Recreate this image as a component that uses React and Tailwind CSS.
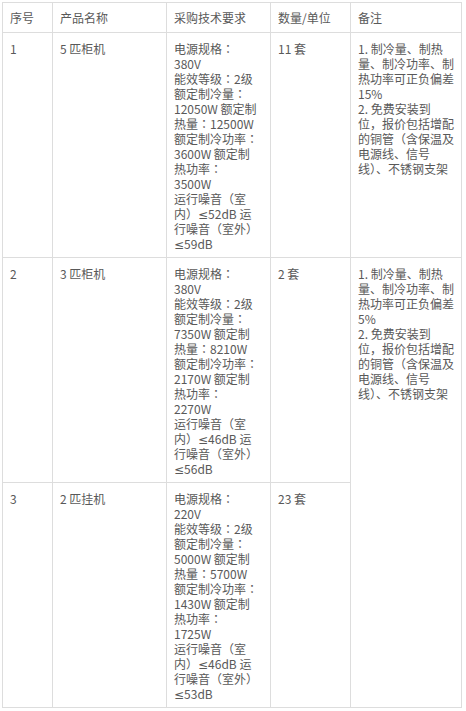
import React from "react";

const rows = [
  {
    no: "1",
    name: "5 匹柜机",
    tech: [
      "电源规格：",
      "380V",
      "能效等级：2级",
      "额定制冷量：",
      "12050W 额定制",
      "热量：12500W",
      "额定制冷功率：",
      "3600W 额定制",
      "热功率：",
      "3500W",
      "运行噪音（室",
      "内）≤52dB 运",
      "行噪音（室外）",
      "≤59dB",
    ],
    qty: "11 套",
    note: [
      "1. 制冷量、制热",
      "量、制冷功率、制",
      "热功率可正负偏差",
      "15%",
      "2. 免费安装到",
      "位，报价包括增配",
      "的铜管（含保温及",
      "电源线、信号",
      "线）、不锈钢支架",
    ],
    span: 1,
  },
  {
    no: "2",
    name: "3 匹柜机",
    tech: [
      "电源规格：",
      "380V",
      "能效等级：2级",
      "额定制冷量：",
      "7350W 额定制",
      "热量：8210W",
      "额定制冷功率：",
      "2170W 额定制",
      "热功率：",
      "2270W",
      "运行噪音（室",
      "内）≤46dB 运",
      "行噪音（室外）",
      "≤56dB",
    ],
    qty: "2 套",
    note: [
      "1. 制冷量、制热",
      "量、制冷功率、制",
      "热功率可正负偏差",
      "5%",
      "2. 免费安装到",
      "位，报价包括增配",
      "的铜管（含保温及",
      "电源线、信号",
      "线）、不锈钢支架",
    ],
    span: 2,
  },
  {
    no: "3",
    name: "2 匹挂机",
    tech: [
      "电源规格：",
      "220V",
      "能效等级：2级",
      "额定制冷量：",
      "5000W 额定制",
      "热量：5700W",
      "额定制冷功率：",
      "1430W 额定制",
      "热功率：",
      "1725W",
      "运行噪音（室",
      "内）≤46dB 运",
      "行噪音（室外）",
      "≤53dB",
    ],
    qty: "23 套",
    note: null,
    span: 0,
  },
];

function Seg({ text }) {
  const out = [];
  let buf = "";
  const flush = (k) => {
    if (buf) {
      out.push(<React.Fragment key={"t" + k}>{buf}</React.Fragment>);
      buf = "";
    }
  };
  [...text].forEach((ch, i) => {
    if (ch === "：" || ch === "（" || ch === "）") {
      flush(i);
      out.push(
        <span key={i} className="font-['Noto_Sans_CJK_JP',sans-serif]">
          {ch}
        </span>
      );
    } else if (ch === "≤") {
      flush(i);
      out.push(
        <span key={i} className="font-['DejaVu_Sans',sans-serif]">
          {ch}
        </span>
      );
    } else {
      buf += ch;
    }
  });
  flush("end");
  return <>{out}</>;
}

function Lines({ lines }) {
  return (
    <>
      {lines.map((l, i) => (
        <div key={i} className="h-[15px] whitespace-nowrap">
          <Seg text={l} />
        </div>
      ))}
    </>
  );
}

const head = "border-r border-b border-[#dddddd] px-[7px] pt-[7px] pb-[7px]";
const cell = "border-r border-b border-[#dddddd] px-[7px] pt-[8px] pb-[6px]";

export default function App() {
  return (
    <div className="w-[466px] h-[711px] bg-white pl-[2px] pt-[2px] font-['Noto_Sans_CJK_SC','Noto_Sans',sans-serif] text-[12px] leading-[15px] text-[#595959]">
      <div className="grid grid-cols-[50px_114px_104px_80px_111px] w-max border-l border-t border-[#dddddd]">
        <div className={head}>序号</div>
        <div className={head}>产品名称</div>
        <div className={head}>采购技术要求</div>
        <div className={head}>数量/单位</div>
        <div className={head}>备注</div>
        {rows.map((r) => (
          <React.Fragment key={r.no}>
            <div className={cell}>{r.no}</div>
            <div className={cell}>{r.name}</div>
            <div className={cell}>
              <Lines lines={r.tech} />
            </div>
            <div className={cell}>{r.qty}</div>
            {r.span === 1 && (
              <div className={cell}>
                <Lines lines={r.note} />
              </div>
            )}
            {r.span === 2 && (
              <div className={cell + " row-span-2"}>
                <Lines lines={r.note} />
              </div>
            )}
          </React.Fragment>
        ))}
      </div>
    </div>
  );
}
